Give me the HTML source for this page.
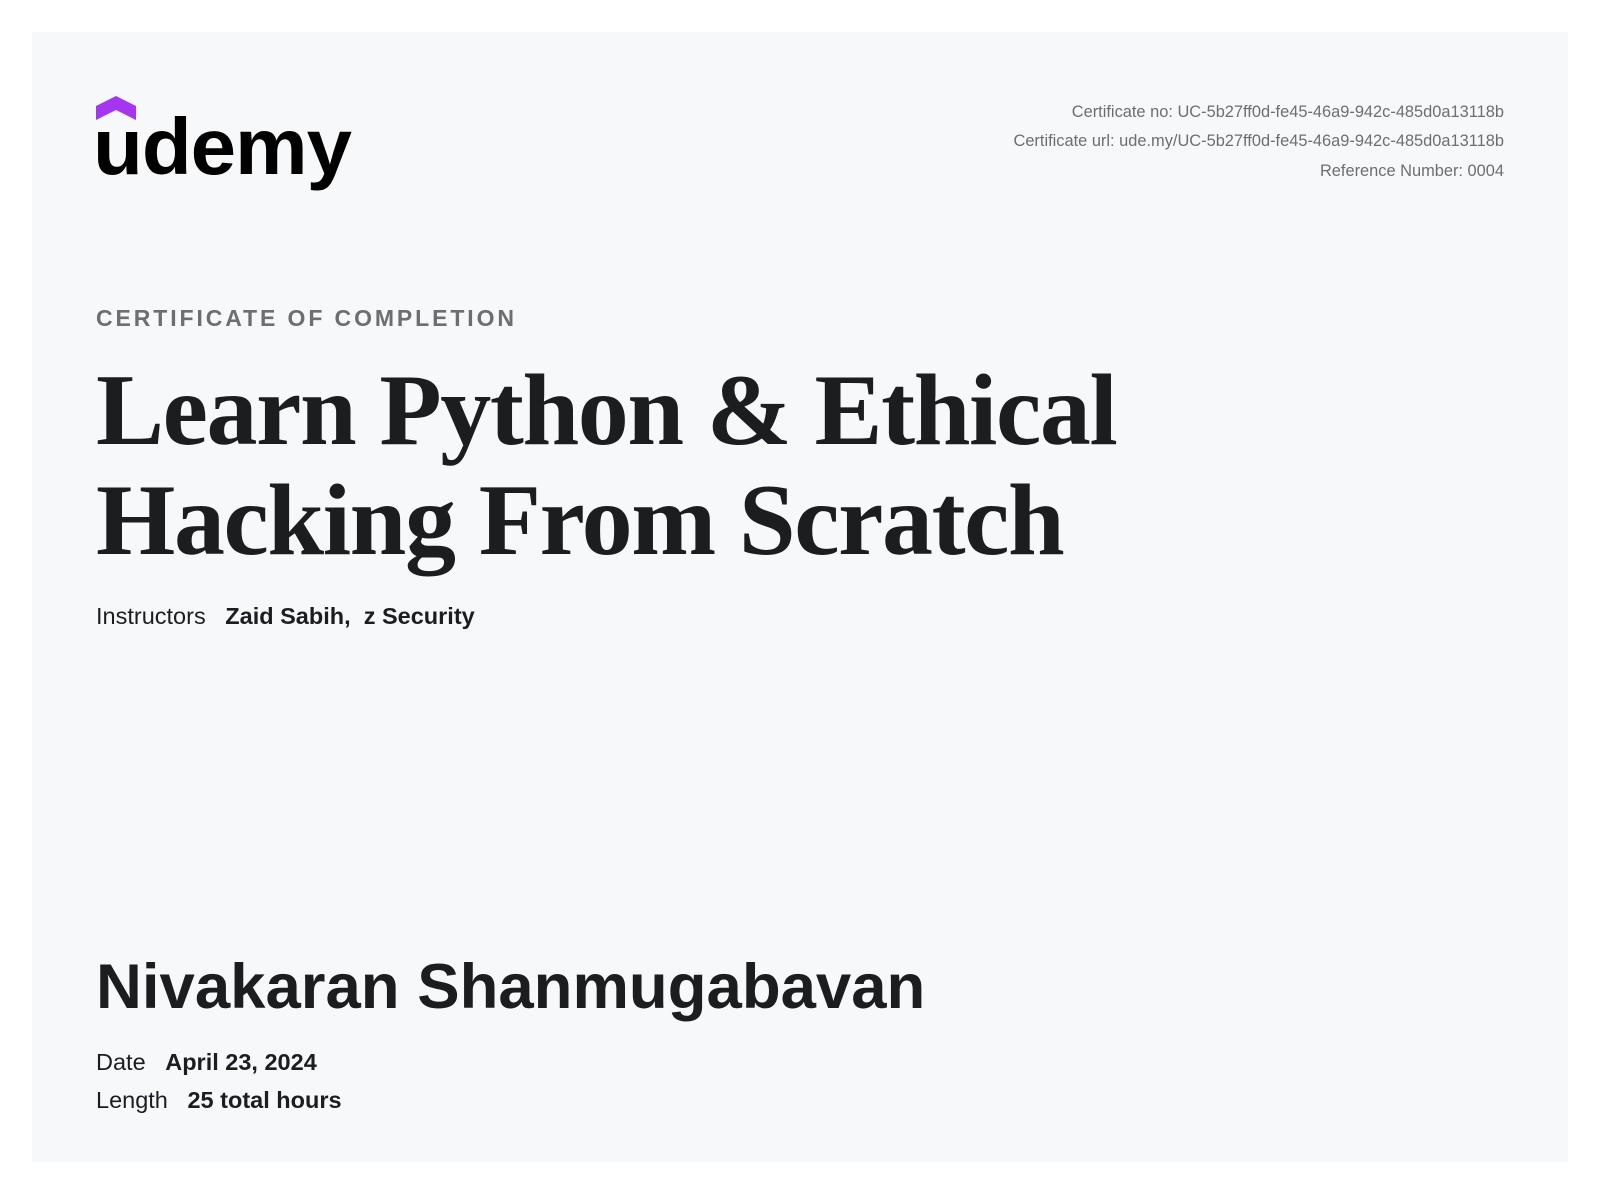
<!DOCTYPE html>
<html><head><meta charset="utf-8"><style>
html,body{margin:0;padding:0;background:#fff;width:1600px;height:1190px;overflow:hidden}
.card{position:absolute;left:32px;top:32px;width:1536px;height:1130px;background:#f7f8fa}
.abs{position:absolute;white-space:nowrap}
.sans{font-family:"Liberation Sans",sans-serif}
.meta{right:96px;font-size:16.4px;color:#6a6f73;text-align:right}
</style></head><body>
<div class="card"></div>
<svg class="abs" style="left:96px;top:96px" width="270" height="98" viewBox="0 0 270 98">
<polygon points="0,9 20,-1 40,9 40,23 20,13 0,23" fill="#a435f0" transform="translate(0,1)"/>
<text x="-3" y="78" font-family="Liberation Sans,sans-serif" font-weight="bold" font-size="80" fill="#000" letter-spacing="-1" textLength="258" lengthAdjust="spacingAndGlyphs">udemy</text>
</svg>
<div class="abs sans meta" style="top:103px">Certificate no: UC-5b27ff0d-fe45-46a9-942c-485d0a13118b</div>
<div class="abs sans meta" style="top:132px">Certificate url: ude.my/UC-5b27ff0d-fe45-46a9-942c-485d0a13118b</div>
<div class="abs sans meta" style="top:162px">Reference Number: 0004</div>
<div class="abs sans" style="left:96px;top:305px;font-size:23px;font-weight:bold;letter-spacing:2.9px;color:#6a6f73">CERTIFICATE OF COMPLETION</div>
<div class="abs" style="left:96px;top:356px;font-family:'Liberation Serif',serif;font-weight:bold;font-size:102px;line-height:110px;color:#1c1d1f;letter-spacing:-1.4px">Learn Python &amp; Ethical<br>Hacking From Scratch</div>
<div class="abs sans" style="left:96px;top:603px;font-size:23.5px;color:#1c1d1f">Instructors&nbsp;&nbsp; <b>Zaid Sabih,&nbsp; z Security</b></div>
<div class="abs sans" style="left:96px;top:951px;font-size:63.5px;font-weight:bold;color:#1c1d1f">Nivakaran Shanmugabavan</div>
<div class="abs sans" style="left:96px;top:1049px;font-size:23.5px;color:#1c1d1f">Date&nbsp;&nbsp; <b>April 23, 2024</b></div>
<div class="abs sans" style="left:96px;top:1087px;font-size:23.5px;color:#1c1d1f">Length&nbsp;&nbsp; <b>25 total hours</b></div>
</body></html>
